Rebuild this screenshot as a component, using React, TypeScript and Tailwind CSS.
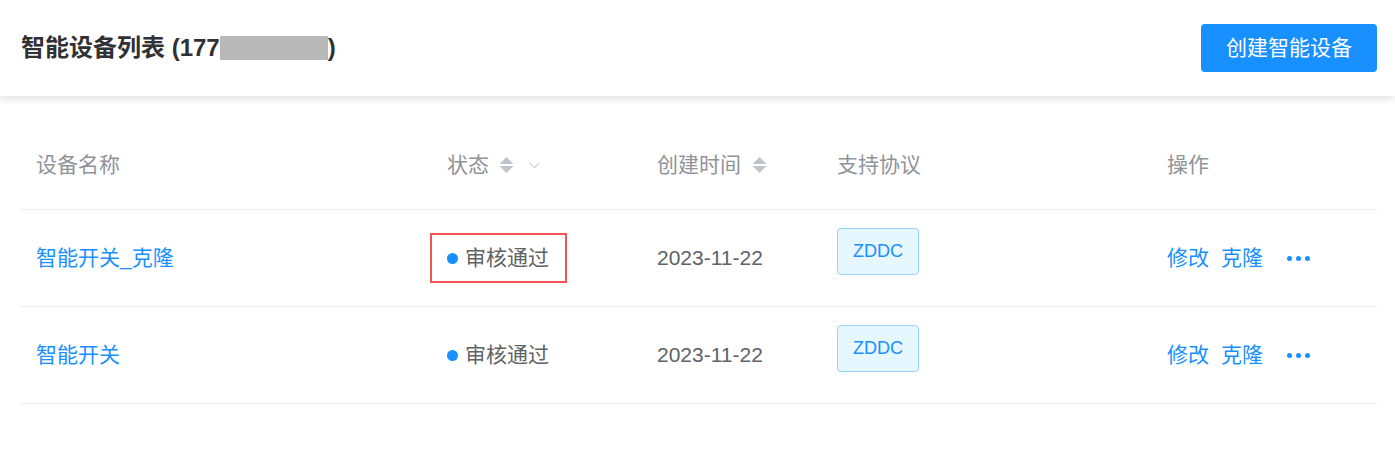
import { Fragment } from "react";

const font = "font-['Liberation_Sans','Noto_Sans_CJK_SC',sans-serif]";

type Row = { name: string; date: string; mark?: boolean };

const rows: Row[] = [
  { name: "智能开关_克隆", date: "2023-11-22", mark: true },
  { name: "智能开关", date: "2023-11-22" },
];

function SortIcon() {
  return (
    <svg width="15" height="18" viewBox="0 0 15 18" className="shrink-0">
      <path d="M0.5 8 L7.5 1 L14.5 8 Z" fill="#c0c4cc" />
      <path d="M0.5 10 L14.5 10 L7.5 17 Z" fill="#c0c4cc" />
    </svg>
  );
}

function Chevron() {
  return (
    <svg width="11" height="7" viewBox="0 0 11 7" className="shrink-0">
      <path d="M0.5 0.8 L5.5 5.8 L10.5 0.8" fill="none" stroke="#b4b7bd" strokeWidth="1" />
    </svg>
  );
}

function App() {
  return (
    <div className={`${font} w-[1395px] h-[470px] bg-white overflow-hidden`}>
      {/* 顶部栏 */}
      <header className="relative z-10 h-24 flex items-center justify-between pl-[21px] pr-[18px] bg-white shadow-[0_3px_8px_rgba(0,0,0,0.12)]">
        <h1 className="flex items-center text-[24px] font-bold text-[#303133]">
          智能设备列表 (177
          <span className="inline-block w-[108px] h-[24px] bg-[#b8b8b8]" />)
        </h1>
        <button
          type="button"
          className="h-12 w-[176px] rounded-[4px] bg-[#1890ff] text-[21px] text-white"
        >
          创建智能设备
        </button>
      </header>

      {/* 表格 */}
      <div className="ml-[21px] w-[1356px] mt-[24px] grid grid-cols-[409px_212px_180px_330px_225px] text-[21px]">
        <div className="h-[90px] flex items-center pl-[15px] text-[#909399] border-b border-[#ebeef5]">
          设备名称
        </div>
        <div className="h-[90px] flex items-center pl-[17px] text-[#909399] border-b border-[#ebeef5]">
          状态
          <span className="ml-[10px]">
            <SortIcon />
          </span>
          <span className="ml-[15px] mt-[2px]">
            <Chevron />
          </span>
        </div>
        <div className="h-[90px] flex items-center pl-[15px] text-[#909399] border-b border-[#ebeef5]">
          创建时间
          <span className="ml-[11px]">
            <SortIcon />
          </span>
        </div>
        <div className="h-[90px] flex items-center pl-[15px] text-[#909399] border-b border-[#ebeef5]">
          支持协议
        </div>
        <div className="h-[90px] flex items-center pl-[15px] text-[#909399] border-b border-[#ebeef5]">
          操作
        </div>

        {rows.map((r) => (
          <Fragment key={r.name}>
            <div className="h-[97px] flex items-center pl-[15px] text-[#1890ff] border-b border-[#ebeef5]">
              {r.name}
            </div>
            <div className="h-[97px] flex items-center border-b border-[#ebeef5]">
              <div
                className={
                  r.mark
                    ? "h-[50px] w-[137px] flex items-center pl-[15px] border-2 border-[#f05454]"
                    : "flex items-center pl-[17px]"
                }
              >
                <span className="w-[11px] h-[11px] rounded-full bg-[#1890ff] mr-[7px]" />
                <span className="text-[#606266]">审核通过</span>
              </div>
            </div>
            <div className="h-[97px] flex items-center pl-[15px] text-[#606266] border-b border-[#ebeef5]">
              {r.date}
            </div>
            <div className="h-[97px] pl-[15px] pt-[18px] border-b border-[#ebeef5]">
              <span className="inline-flex items-center justify-center w-[82px] h-[47px] rounded-[4px] border border-[#91d5ff] bg-[#e6f7ff] text-[18px] text-[#1890ff]">
                ZDDC
              </span>
            </div>
            <div className="h-[97px] flex items-center pl-[15px] text-[#1890ff] border-b border-[#ebeef5]">
              <span>修改</span>
              <span className="ml-[12px]">克隆</span>
              <span className="ml-[24px] flex items-center gap-[4px]">
                <span className="w-[5px] h-[5px] rounded-full bg-[#1890ff]" />
                <span className="w-[5px] h-[5px] rounded-full bg-[#1890ff]" />
                <span className="w-[5px] h-[5px] rounded-full bg-[#1890ff]" />
              </span>
            </div>
          </Fragment>
        ))}
      </div>
    </div>
  );
}

export default App;
